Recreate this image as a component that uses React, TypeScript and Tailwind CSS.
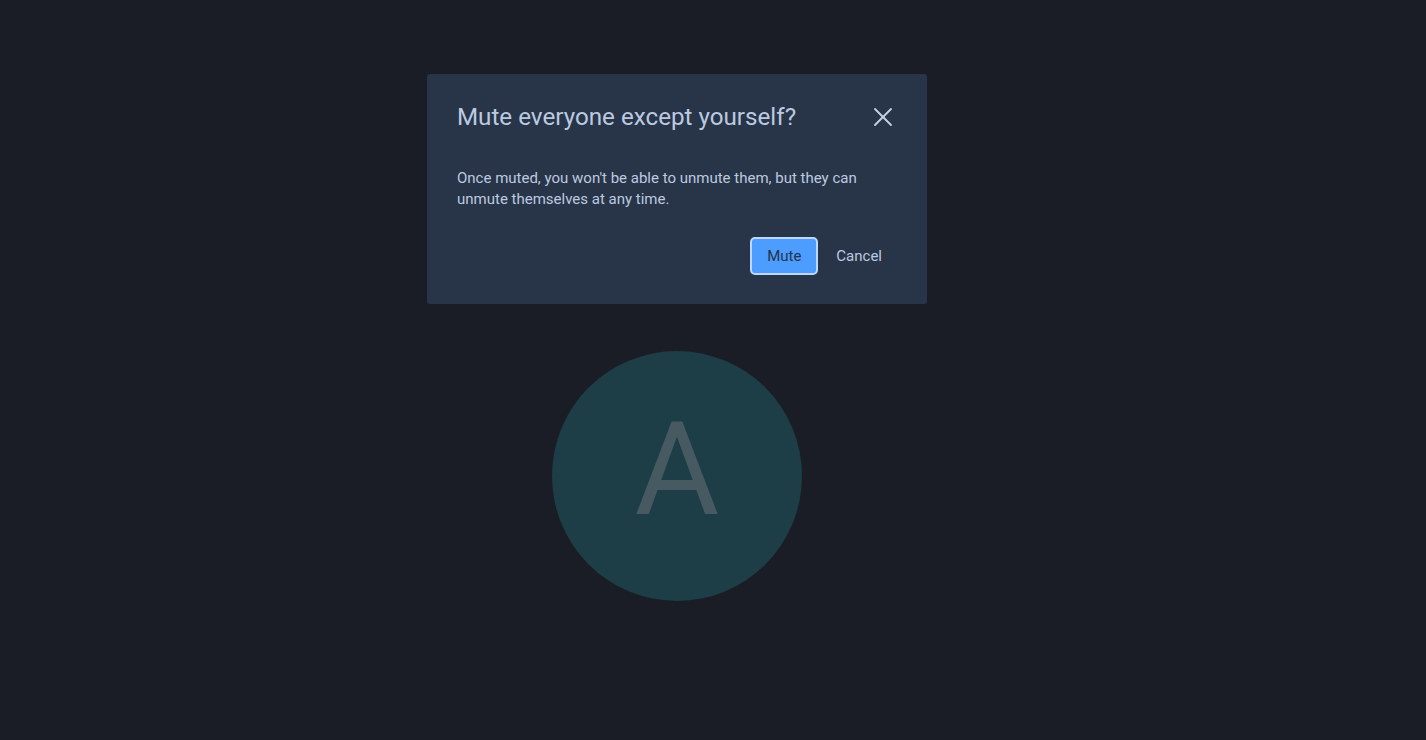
import { X } from "lucide-react"

export default function App() {
  return (
    <div className="min-h-screen w-full bg-[#1a1d26] font-['Roboto',sans-serif]">
      <div className="w-[1354px] flex flex-col items-center pt-[74px]">
        <div className="w-[500px] h-[230px] bg-[#283447] rounded-[3px] pl-[30px] pr-[30px] pt-[27px] flex flex-col">
          <div className="flex items-center justify-between">
            <h2 className="text-[24.2px] leading-[32px] text-[#bccae0]">Mute everyone except yourself?</h2>
            <button className="-mr-[2px] text-[#c5d0e2]">
              <X className="w-[32px] h-[32px]" strokeWidth={1.4} />
            </button>
          </div>
          <p className="mt-[35px] text-[15px] leading-[21px] text-[#bccae0] pr-[30px]">
            Once muted, you won't be able to unmute them, but they can unmute themselves at any time.
          </p>
          <div className="mt-[27px] flex items-center justify-end gap-[18px] pr-[15px]">
            <button className="w-[68px] h-[38px] rounded-[5px] bg-[#4d9cff] border-2 border-[#bcd8ff] text-[15px] text-[#233349]">
              Mute
            </button>
            <button className="text-[15px] text-[#bccae0]">Cancel</button>
          </div>
        </div>
        <div className="mt-[47px] w-[250px] h-[250px] rounded-full bg-[#1d3d47] flex items-center justify-center">
          <span className="text-[130px] leading-none text-[#475a62] pb-[12px]">A</span>
        </div>
      </div>
    </div>
  )
}
